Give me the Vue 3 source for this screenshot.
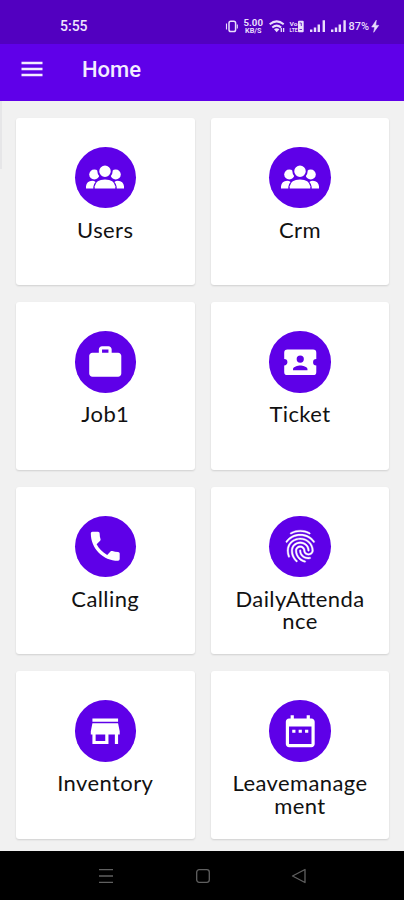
<script setup>
const icons = {
  work: 'M20 6h-4V4c0-1.11-.89-2-2-2h-4c-1.11 0-2 .89-2 2v2H4c-1.11 0-1.99.89-1.99 2L2 19c0 1.11.89 2 2 2h16c1.11 0 2-.89 2-2V8c0-1.11-.89-2-2-2zm-6 0h-4V4h4v2z',
  ticket: 'M20 12A2 2 0 0 0 22 14V18A2 2 0 0 1 20 20H4A2 2 0 0 1 2 18V14C3.11 14 4 13.1 4 12A2 2 0 0 0 2 10V6A2 2 0 0 1 4 4H20A2 2 0 0 1 22 6V10A2 2 0 0 0 20 12M16.5 16.25C16.5 14.75 13.5 14 12 14C10.5 14 7.5 14.75 7.5 16.25V17H16.5V16.25M12 12.25A2.25 2.25 0 0 0 14.25 10A2.25 2.25 0 0 0 12 7.75A2.25 2.25 0 0 0 9.75 10A2.25 2.25 0 0 0 12 12.25Z',
  call: 'M6.62 10.79c1.44 2.83 3.76 5.14 6.59 6.59l2.2-2.2c.27-.27.67-.36 1.02-.24 1.12.37 2.33.57 3.57.57.55 0 1 .45 1 1V20c0 .55-.45 1-1 1-9.39 0-17-7.61-17-17 0-.55.45-1 1-1h3.5c.55 0 1 .45 1 1 0 1.25.2 2.45.57 3.57.11.35.03.74-.25 1.02l-2.2 2.2z',
  fingerprint: 'M17.81 4.47c-.08 0-.16-.02-.23-.06C15.66 3.42 14 3 12.01 3c-1.98 0-3.86.47-5.57 1.41-.24.13-.54.04-.68-.2-.13-.24-.04-.55.2-.68C7.82 2.52 9.86 2 12.01 2c2.13 0 3.99.47 6.03 1.52.25.13.34.43.21.67-.09.18-.26.28-.44.28zM3.5 9.72c-.1 0-.2-.03-.29-.09-.23-.16-.28-.47-.12-.7.99-1.4 2.25-2.5 3.75-3.27C9.98 4.04 14 4.03 17.15 5.65c1.5.77 2.76 1.86 3.75 3.25.16.22.11.54-.12.7-.23.16-.54.11-.7-.12-.9-1.26-2.04-2.25-3.39-2.94-2.87-1.47-6.54-1.47-9.4.01-1.36.7-2.5 1.7-3.4 2.96-.08.14-.23.21-.39.21zm6.25 12.07c-.13 0-.26-.05-.35-.15-.87-.87-1.34-1.43-2.01-2.64-.69-1.23-1.05-2.73-1.05-4.34 0-2.97 2.54-5.39 5.66-5.39s5.66 2.42 5.66 5.39c0 .28-.22.5-.5.5s-.5-.22-.5-.5c0-2.42-2.09-4.39-4.66-4.39-2.57 0-4.66 1.97-4.66 4.39 0 1.44.32 2.77.93 3.85.64 1.15 1.08 1.64 1.85 2.42.19.2.19.51 0 .71-.11.1-.24.15-.37.15zm7.17-1.85c-1.19 0-2.24-.3-3.1-.89-1.49-1.01-2.38-2.65-2.38-4.39 0-.28.22-.5.5-.5s.5.22.5.5c0 1.41.72 2.74 1.94 3.56.71.48 1.54.71 2.54.71.24 0 .64-.03 1.04-.1.27-.05.53.13.58.41.05.27-.13.53-.41.58-.57.11-1.07.12-1.21.12zM14.91 22c-.04 0-.09-.01-.13-.02-1.59-.44-2.63-1.03-3.72-2.1-1.4-1.39-2.17-3.24-2.17-5.22 0-1.62 1.38-2.94 3.08-2.94 1.7 0 3.08 1.32 3.08 2.94 0 1.07.93 1.94 2.08 1.94s2.08-.87 2.08-1.94c0-3.77-3.25-6.83-7.25-6.83-2.84 0-5.44 1.58-6.61 4.03-.39.81-.59 1.76-.59 2.8 0 .78.07 2.01.67 3.61.1.26-.03.55-.29.64-.26.1-.55-.04-.64-.29-.49-1.31-.73-2.61-.73-3.96 0-1.2.23-2.29.68-3.24 1.33-2.79 4.28-4.6 7.51-4.6 4.55 0 8.25 3.51 8.25 7.83 0 1.62-1.38 2.94-3.08 2.94s-3.08-1.32-3.08-2.94c0-1.07-.93-1.94-2.08-1.94s-2.08.87-2.08 1.94c0 1.71.66 3.31 1.87 4.51.95.94 1.86 1.46 3.27 1.85.27.07.42.35.35.61-.05.23-.26.38-.47.38z',
  store: 'M20 4H4v2h16V4zm1 10v-2l-1-5H4l-1 5v2h1v6h10v-6h4v6h2v-6h1zm-9 4H6v-4h6v4z',
  calendar: 'M9 11H7v2h2v-2zm4 0h-2v2h2v-2zm4 0h-2v2h2v-2zm2-7h-1V2h-2v2H8V2H6v2H5c-1.11 0-1.99.9-1.99 2L3 20c0 1.1.89 2 2 2h14c1.1 0 2-.9 2-2V6c0-1.1-.9-2-2-2zm0 16H5V9h14v11z',
}

const tiles = [
  { label: 'Users', icon: 'group' },
  { label: 'Crm', icon: 'group' },
  { label: 'Job1', icon: 'work' },
  { label: 'Ticket', icon: 'ticket' },
  { label: 'Calling', icon: 'call' },
  { label: 'DailyAttendance', icon: 'fingerprint' },
  { label: 'Inventory', icon: 'store' },
  { label: 'Leavemanagement', icon: 'calendar' },
]
</script>

<template>
  <div class="screen">
    <div class="status">
      <span class="time">5:55</span>
      <svg class="status-icons" width="160" height="20" viewBox="222 16 160 20">
        <!-- vibrate -->
        <rect x="229" y="21.2" width="6.6" height="10.4" rx="1.8" fill="none" stroke="#e9defc" stroke-width="1.5" />
        <path d="M226.500 23.500v6M237.300 24.500v4" stroke="#e9defc" stroke-width="1.100" />
        <!-- network speed -->
        <text x="243.500" y="26.400" font-size="9" font-weight="700" textLength="19.500" lengthAdjust="spacingAndGlyphs">5.00</text>
        <text x="245" y="33" font-size="7" font-weight="700" textLength="16.500" lengthAdjust="spacingAndGlyphs">KB/S</text>
        <!-- wifi -->
        <g fill="none" stroke="#e9defc" stroke-width="2">
          <path d="M269.700 24.200Q276.700 18.500 283.700 24.200" />
          <path d="M272.300 27.400Q276.700 23.800 281.100 27.400" />
        </g>
        <path d="M274 29.200q2.700-2 5.400 0l-2.700 3z" fill="#e9defc" />
        <path d="M281.300 32v-4M283.600 28v4" stroke="#e9defc" stroke-width="1.300" />
        <!-- volte -->
        <text x="289.500" y="25.900" font-size="6" font-weight="700" textLength="8" lengthAdjust="spacingAndGlyphs">Vo</text>
        <text x="289.500" y="32.100" font-size="5" font-weight="700" textLength="8" lengthAdjust="spacingAndGlyphs">LTE</text>
        <rect x="298" y="20.700" width="5.700" height="11.500" rx="1" fill="#e9defc" />
        <path d="M299.600 23h1.700v3M299.500 29.500h2.500" stroke="#5200c4" stroke-width=".8" fill="none" />
        <!-- signal bars -->
        <g fill="#e9defc">
          <path d="M310 29.500h2.400v2.500H310zM313.800 27.500h2.400V32h-2.400zM317.600 24.500h2.400V32h-2.400zM322.600 20.300h2.400V32h-2.400z" />
          <path d="M331 29.500h2.400v2.500H331zM334.800 27.500h2.400V32h-2.400zM338.600 24.500h2.400V32h-2.400zM343.400 20.300h2.400V32h-2.400z" />
          <path d="M376.300 20.200l-4.600 6.800h3l-1 5.300 5-6.900h-3z" stroke="#e9defc" stroke-width=".6" />
        </g>
        <text x="348.500" y="30" font-size="10.500" font-weight="500" textLength="20.500" lengthAdjust="spacingAndGlyphs">87%</text>
      </svg>
    </div>

    <header class="appbar">
      <svg class="menu" width="22" height="16" viewBox="0 0 22 16">
        <path d="M.5 2h21M.5 8h21M.5 14h21" stroke="#f3ecff" stroke-width="2.400" />
      </svg>
      <h1>Home</h1>
    </header>

    <main class="grid">
      <section v-for="tile in tiles" :key="tile.label" class="card">
        <div class="disc">
          <svg v-if="tile.icon === 'group'" width="40" height="26" viewBox="0 0 40 26">
            <g fill="#fff">
              <circle cx="9.300" cy="10.500" r="5.100" />
              <circle cx="30.700" cy="10.500" r="5.100" />
              <path d="M1 24.600v-2.300q.6-5.300 6.200-5.600 2 0 3.400 1.300-2.300 2.300-2.300 5v1.600zM39 24.600v-2.300q-.6-5.300-6.200-5.600-2 0-3.400 1.300 2.300 2.300 2.300 5v1.600z" />
              <circle cx="20" cy="7.300" r="6.700" stroke="#5e00e8" stroke-width="1.900" />
              <path d="M9.700 24.600v-2.300Q10.700 15.700 20 15.500q9.300.2 10.300 6.800v2.300z" />
            </g>
          </svg>
          <svg v-else width="38.500" height="38.500" viewBox="0 0 24 24">
            <path :d="icons[tile.icon]" :class="{ bold: tile.icon === 'fingerprint' }" fill="#fff" fill-rule="evenodd" />
          </svg>
        </div>
        <p>{{ tile.label }}</p>
      </section>
      <i class="edge"></i>
    </main>

    <nav class="softkeys">
      <svg width="16" height="16" viewBox="0 0 16 16"><path d="M1 1.700h14M1 8h14M1 14.300h14" /></svg>
      <svg width="16" height="16" viewBox="0 0 16 16"><rect x="1.700" y="1.700" width="12.600" height="12.600" rx="2.500" /></svg>
      <svg width="16" height="16" viewBox="0 0 16 16"><path d="M1.500 8L14 1.500v13z" stroke-linejoin="round" /></svg>
    </nav>
  </div>
</template>

<style>
body {
  margin: 0;
  background: #f1f1f1;
}
</style>

<style scoped>
.screen {
  width: 404px;
  height: 900px;
  display: flex;
  flex-direction: column;
  overflow: hidden;
  background: #f1f1f1;
  font-family: Roboto, "Liberation Sans", sans-serif;
}
.status {
  height: 43.500px;
  flex: none;
  box-sizing: border-box;
  padding: 16px 22px 0 60px;
  display: flex;
  justify-content: space-between;
  background: #5200c0;
}
.time {
  font-size: 14px;
  line-height: 21px;
  font-weight: 500;
  color: #eee5fd;
}
.status-icons text {
  fill: #e9defc;
}
.appbar {
  height: 57px;
  flex: none;
  box-sizing: border-box;
  padding: 0 21px 5px;
  display: flex;
  align-items: center;
  gap: 39px;
  background: #5f00e9;
}
.menu {
  margin-top: -2px;
}
.appbar h1 {
  margin: 0;
  font-size: 22px;
  line-height: 26px;
  font-weight: 500;
  color: #f3ecff;
}
.grid {
  position: relative;
  flex: 1;
  box-sizing: border-box;
  padding: 17px 15px 0 16px;
  display: grid;
  grid-template-columns: 178.500px 178px;
  grid-auto-rows: 167.500px;
  gap: 17px 16.500px;
  align-content: start;
}
.edge {
  position: absolute;
  left: 0;
  top: 0;
  width: 2px;
  height: 68px;
  background: #e6e6e8;
}
.card {
  box-sizing: border-box;
  padding: 29px 20px 0;
  display: flex;
  flex-direction: column;
  align-items: center;
  background: #fff;
  border-radius: 3px;
  box-shadow: 0 1px 2px rgba(0, 0, 0, 0.14);
}
.disc {
  width: 61.500px;
  height: 61.500px;
  flex: none;
  display: flex;
  align-items: center;
  justify-content: center;
  border-radius: 50%;
  background: #5e00e8;
}
.bold {
  stroke: #fff;
  stroke-width: 0.25;
}
.card p {
  width: 137px;
  margin: 10.500px 0 0;
  font-family: Lato, sans-serif;
  font-size: 22px;
  line-height: 22.500px;
  letter-spacing: 0.400px;
  font-feature-settings: "liga" 1;
  text-align: center;
  word-break: break-all;
  color: #111;
}
.softkeys {
  height: 49px;
  flex: none;
  box-sizing: border-box;
  padding-left: 1px;
  display: flex;
  align-items: center;
  justify-content: center;
  gap: 80.500px;
  background: #000;
}
.softkeys svg {
  fill: none;
  stroke: #606060;
  stroke-width: 1.300;
}
</style>
